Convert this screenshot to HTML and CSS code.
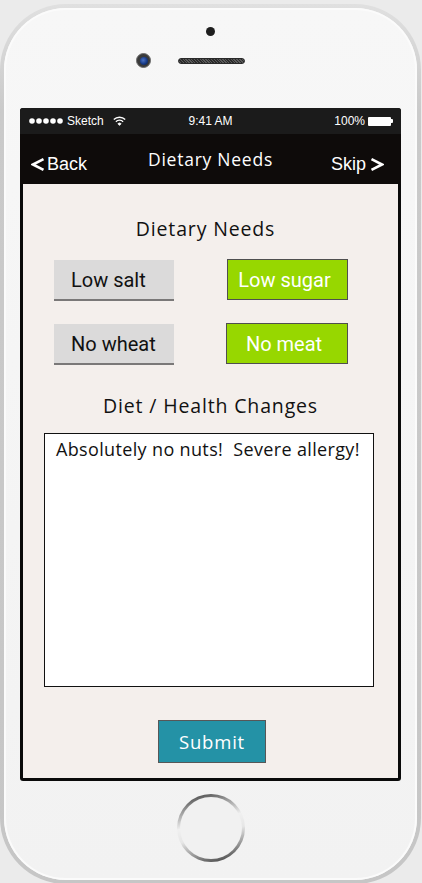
FILE: index.html
```html
<!DOCTYPE html>
<html lang="en">
<head>
<meta charset="utf-8">
<title>Dietary Needs</title>
<link rel="stylesheet" href="styles.css">
</head>
<body>
<div class="phone">
  <div class="phone-body">
    <div class="top">
      <div class="sensor"></div>
      <div class="cam-row">
        <div class="camera"><div class="lens"></div></div>
        <div class="speaker"></div>
      </div>
    </div>
    <div class="screen">
      <div class="status">
        <div class="status-left">
          <svg class="signal" width="34" height="6" viewBox="0 0 34 6"><circle cx="3" cy="3" r="2.8" fill="#fff"/><circle cx="10" cy="3" r="2.8" fill="#fff"/><circle cx="17" cy="3" r="2.8" fill="#fff"/><circle cx="24" cy="3" r="2.8" fill="#fff"/><circle cx="31" cy="3" r="2.8" fill="#fff"/></svg>
          <span class="carrier">Sketch</span>
          <svg class="wifi" width="13" height="10" viewBox="0 0 13 10"><path d="M0.8 3.6 A8 8 0 0 1 12.2 3.6" fill="none" stroke="#fff" stroke-width="1.4"/><path d="M2.9 5.7 A5 5 0 0 1 10.1 5.7" fill="none" stroke="#fff" stroke-width="1.4"/><path d="M4.9 7.7 A2.3 2.3 0 0 1 8.1 7.7 L6.5 9.4 Z" fill="#fff" stroke="#fff" stroke-width="0.8"/></svg>
        </div>
        <div class="status-time">9:41 AM</div>
        <div class="status-right">
          <span>100%</span>
          <div class="battery"><div class="battery-body"></div><div class="battery-tip"></div></div>
        </div>
      </div>
      <div class="nav">
        <div class="nav-left">
          <svg width="14" height="13" viewBox="0 0 14 13"><polyline points="12.5,1.2 2,6.5 12.5,11.8" fill="none" stroke="#fff" stroke-width="2.6" stroke-linejoin="miter"/></svg>
          <span>Back</span>
        </div>
        <div class="nav-title">Dietary Needs</div>
        <div class="nav-right">
          <span>Skip</span>
          <svg width="14" height="13" viewBox="0 0 14 13"><polyline points="1.5,1.2 12,6.5 1.5,11.8" fill="none" stroke="#fff" stroke-width="2.6" stroke-linejoin="miter"/></svg>
        </div>
      </div>
      <div class="content">
        <h2 class="heading heading-1">Dietary Needs</h2>
        <div class="options">
          <div class="opt opt-off">Low salt</div>
          <div class="opt opt-on">Low sugar</div>
          <div class="opt opt-off">No wheat</div>
          <div class="opt opt-on opt-meat">No meat</div>
        </div>
        <h2 class="heading heading-2">Diet / Health Changes</h2>
        <div class="notes">Absolutely no nuts!&nbsp; Severe allergy!</div>
        <div class="submit-row"><div class="submit">Submit</div></div>
      </div>
    </div>
    <div class="home-area">
      <div class="home-ring"><div class="home-inner"></div></div>
    </div>
  </div>
</div>
</body>
</html>
```

FILE: styles.css
```css
* { box-sizing: border-box; }
html, body { margin: 0; padding: 0; }
body {
  background: #ebebeb;
  width: 422px;
  height: 883px;
  overflow: hidden;
  font-family: "Liberation Sans", Arial, sans-serif;
}
.phone {
  margin-top: 4px;
  width: 421px;
  height: 880px;
  border-radius: 66px;
  padding: 4px;
  background: linear-gradient(to bottom, #e0e0e0 0%, #cacaca 12%, #c6c6c6 100%);
}
.phone-body {
  height: 100%;
  border-radius: 62px;
  background: linear-gradient(to bottom, #f7f7f7 0%, #f2f2f2 100%);
  box-shadow: inset 0 0 0 2px #fbfbfb;
  padding: 0 16px;
  display: flex;
  flex-direction: column;
}
.top {
  height: 100px;
  padding-top: 19px;
  display: flex;
  flex-direction: column;
  align-items: center;
}
.sensor {
  width: 9px;
  height: 9px;
  border-radius: 50%;
  background: #1e1e1e;
}
.cam-row {
  align-self: stretch;
  margin-top: 17px;
  padding-left: 116px;
  display: flex;
  align-items: center;
  gap: 27px;
}
.camera {
  width: 15px;
  height: 15px;
  border-radius: 50%;
  background: #3a3a3a;
  border: 1px solid #6d6d6d;
  display: flex;
  align-items: center;
  justify-content: center;
}
.lens {
  width: 8px;
  height: 8px;
  border-radius: 50%;
  background: radial-gradient(circle at 40% 40%, #4b72c4 0%, #173a86 55%, #0d1b3b 100%);
}
.speaker {
  width: 67px;
  height: 6px;
  border-radius: 3px;
  background: repeating-linear-gradient(45deg, #2b2b2b 0 1px, #5a5a5a 1px 2px);
  border: 1px solid #2a2a2a;
}
.screen {
  height: 673px;
  background: #0a0a0a;
  border-radius: 3px;
  display: flex;
  flex-direction: column;
}
.status {
  height: 26px;
  background: #1b1b1b;
  border-radius: 3px 3px 0 0;
  color: #fff;
  font-size: 12px;
  display: grid;
  grid-template-columns: 1fr auto 1fr;
  align-items: center;
}
.status-left {
  padding-left: 9px;
  display: flex;
  align-items: center;
}
.signal { display: block; }
.carrier { margin-left: 4px; }
.wifi { margin-left: 9px; display: block; }
.status-time { text-align: center; }
.status-right {
  justify-self: end;
  padding-right: 8px;
  display: flex;
  align-items: center;
  gap: 3px;
}
.battery { display: flex; align-items: center; }
.battery-body {
  width: 23px;
  height: 9px;
  background: #fff;
  border-radius: 1px;
}
.battery-tip {
  width: 2px;
  height: 4px;
  background: #fff;
  border-radius: 0 1px 1px 0;
}
.nav {
  height: 50px;
  background: #0e0b0a;
  color: #fff;
  display: grid;
  grid-template-columns: 1fr auto 1fr;
  align-items: center;
}
.nav-left {
  padding-left: 11px;
  padding-top: 10px;
  display: flex;
  align-items: center;
  gap: 2px;
  font-size: 18px;
}
.nav-left svg, .nav-right svg { display: block; }
.nav-right {
  justify-self: end;
  padding-right: 17px;
  padding-top: 10px;
  display: flex;
  align-items: center;
  gap: 4px;
  font-size: 18px;
}
.nav-title {
  font-family: "Open Sans", sans-serif;
  font-size: 17.5px;
  letter-spacing: 0.75px;
  padding-bottom: 1px;
}
.content {
  flex: 1;
  margin: 0 3px 3px;
  background: #f4efec;
  display: flex;
  flex-direction: column;
  padding-top: 32px;
}
.heading {
  margin: 0;
  font-family: "Open Sans", sans-serif;
  font-weight: 400;
  font-size: 19.5px;
  line-height: 26px;
  letter-spacing: 0.85px;
  color: #111;
  text-align: center;
}
.heading-1 { padding-right: 10px; }
.options {
  margin-top: 17px;
  padding-left: 31px;
  display: grid;
  grid-template-columns: 120px 121px;
  column-gap: 53px;
  row-gap: 22px;
}
.opt {
  height: 41px;
  font-family: Roboto, sans-serif;
  font-size: 20px;
  display: flex;
  align-items: center;
}
.opt-off {
  background: #dbdada;
  border-bottom: 2px solid #7a7878;
  color: #111;
  padding-left: 17px;
  margin-top: 1px;
}
.opt-on {
  background: #97d700;
  border: 1px solid #4f4f4f;
  color: #fff;
  justify-content: center;
  padding-right: 6px;
}
.opt-meat { margin-left: -1px; }
.heading-2 { margin-top: 28px; }
.notes {
  margin: 14px 0 0 21px;
  width: 330px;
  height: 254px;
  background: #fff;
  border: 1px solid #111;
  padding: 3px 0 0 11px;
  font-family: "Open Sans", sans-serif;
  font-size: 18px;
  letter-spacing: 0.35px;
  color: #111;
  white-space: nowrap;
}
.submit-row {
  margin-top: 33px;
  display: flex;
  padding-left: 135px;
}
.submit {
  width: 108px;
  height: 43px;
  background: #2492a6;
  border: 1px solid #575757;
  color: #fff;
  font-family: "Open Sans", sans-serif;
  font-size: 18.5px;
  letter-spacing: 0.8px;
  display: flex;
  align-items: center;
  justify-content: center;
}
.home-area {
  display: flex;
  justify-content: center;
  padding-top: 13px;
}
.home-ring {
  width: 68px;
  height: 68px;
  border-radius: 50%;
  background: linear-gradient(165deg, #2e2e2e 0%, #9a9a9a 22%, #f0f0f0 42%, #e6e6e6 58%, #8a8a8a 80%, #2a2a2a 100%);
  display: flex;
  align-items: center;
  justify-content: center;
}
.home-inner {
  width: 62px;
  height: 62px;
  border-radius: 50%;
  background: #f1f1f1;
}
```
